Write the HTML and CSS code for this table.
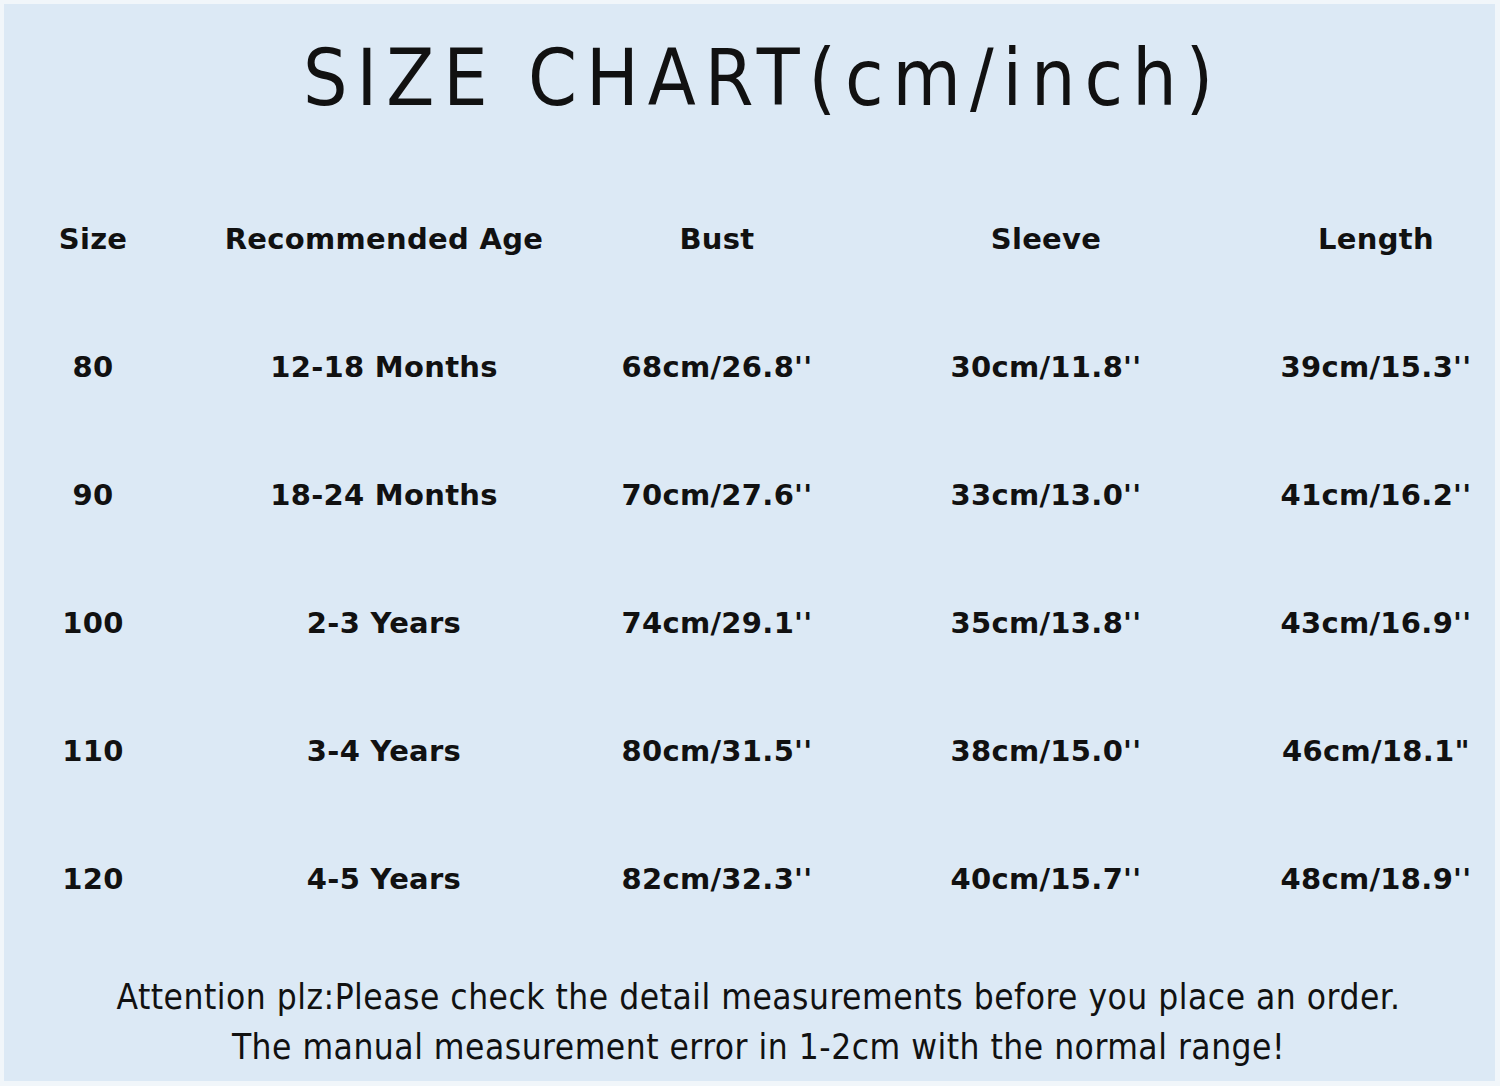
FILE: index.html
```html
<!DOCTYPE html>
<html>
<head>
<meta charset="utf-8">
<link rel="stylesheet" href="styles.css">
</head>
<body>
<div class="frame">
  <h1 class="title">SIZE CHART(cm/inch)</h1>
  <div class="chart">
    <div class="row head">
      <div class="c c1">Size</div><div class="c c2">Recommended Age</div><div class="c c3">Bust</div><div class="c c4">Sleeve</div><div class="c c5">Length</div>
    </div>
    <div class="row">
      <div class="c c1">80</div><div class="c c2">12-18 Months</div><div class="c c3">68cm/26.8''</div><div class="c c4">30cm/11.8''</div><div class="c c5">39cm/15.3''</div>
    </div>
    <div class="row">
      <div class="c c1">90</div><div class="c c2">18-24 Months</div><div class="c c3">70cm/27.6''</div><div class="c c4">33cm/13.0''</div><div class="c c5">41cm/16.2''</div>
    </div>
    <div class="row">
      <div class="c c1">100</div><div class="c c2">2-3 Years</div><div class="c c3">74cm/29.1''</div><div class="c c4">35cm/13.8''</div><div class="c c5">43cm/16.9''</div>
    </div>
    <div class="row">
      <div class="c c1">110</div><div class="c c2">3-4 Years</div><div class="c c3">80cm/31.5''</div><div class="c c4">38cm/15.0''</div><div class="c c5">46cm/18.1"</div>
    </div>
    <div class="row">
      <div class="c c1">120</div><div class="c c2">4-5 Years</div><div class="c c3">82cm/32.3''</div><div class="c c4">40cm/15.7''</div><div class="c c5">48cm/18.9''</div>
    </div>
  </div>
  <div class="note">
    <p>Attention plz:Please check the detail measurements before you place an order.</p>
    <p>The manual measurement error in 1-2cm with the normal range!</p>
  </div>
</div>
</body>
</html>
```
FILE: styles.css
```css
html, body {
  margin: 0;
  padding: 0;
  background: #f1f6fa;
}
.frame {
  width: 1491px;
  height: 1077px;
  margin: 4px 5px 5px 4px;
  background: #dce9f5;
  display: flex;
  flex-direction: column;
  color: #111;
}
.title {
  margin: 0;
  height: 172px;
  display: flex;
  align-items: center;
  justify-content: center;
  padding-bottom: 24px;
  padding-left: 26px;
  box-sizing: border-box;
  font-family: "DejaVu Sans Condensed", "DejaVu Sans", sans-serif;
  font-weight: normal;
  font-size: 78px;
  letter-spacing: 9px;
}
.chart {
  display: flex;
  flex-direction: column;
  margin-top: -1px;
}
.row {
  display: grid;
  grid-template-columns: 146px 436px 230px 428px 232px;
  padding-left: 16px;
  height: 128px;
  align-items: center;
}
.c {
  text-align: center;
  font-family: "DejaVu Sans", Verdana, sans-serif;
  font-weight: bold;
  font-size: 29px;
  letter-spacing: 0.3px;
  white-space: nowrap;
}
.note {
  margin-top: 29px;
  padding-left: 18px;
  text-align: center;
  font-family: "DejaVu Sans Condensed", "DejaVu Sans", sans-serif;
  font-size: 35px;
  letter-spacing: 0.5px;
  line-height: 50px;
}
.note p {
  margin: 0;
}
```
